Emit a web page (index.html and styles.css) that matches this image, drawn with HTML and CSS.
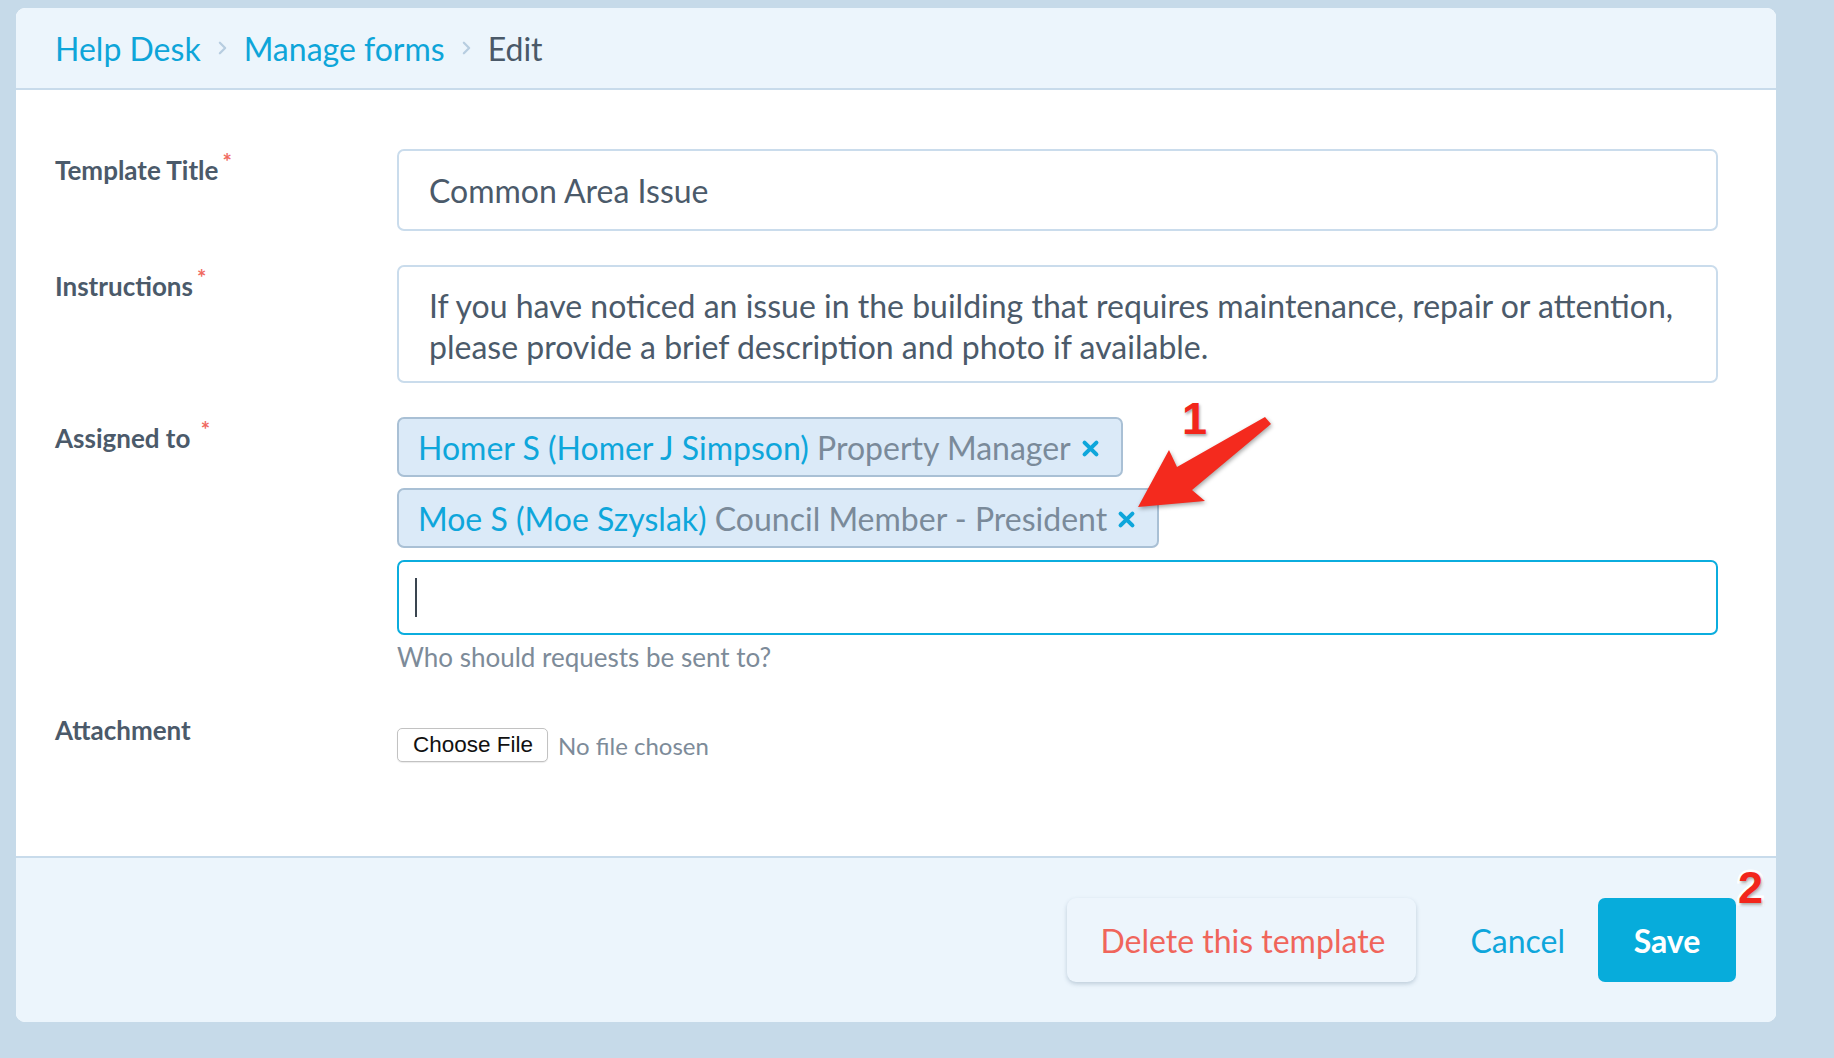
FILE: index.html
```html
<!DOCTYPE html>
<html lang="en">
<head>
<meta charset="utf-8">
<title>Edit form template</title>
<link rel="stylesheet" href="styles.css">
</head>
<body>
<div class="page">
  <div class="card">
    <header class="crumbs">
      <a class="crumb-link" href="#">Help Desk</a>
      <svg class="chev" viewBox="0 0 10 16"><path d="M2 2l6 6-6 6" fill="none" stroke="#b7cde0" stroke-width="2.6" stroke-linecap="round" stroke-linejoin="round"/></svg>
      <a class="crumb-link" href="#">Manage forms</a>
      <svg class="chev" viewBox="0 0 10 16"><path d="M2 2l6 6-6 6" fill="none" stroke="#b7cde0" stroke-width="2.6" stroke-linecap="round" stroke-linejoin="round"/></svg>
      <span class="crumb-current">Edit</span>
    </header>

    <section class="form">
      <div class="row row-title">
        <div class="label">Template Title<span class="req">*</span></div>
        <div class="field"><div class="input">Common Area Issue</div></div>
      </div>

      <div class="row row-instr">
        <div class="label">Instructions<span class="req">*</span></div>
        <div class="field"><div class="textarea">If you have noticed an issue in the building that requires maintenance, repair or attention,<br>please provide a brief description and photo if available.</div></div>
      </div>

      <div class="row row-assign">
        <div class="label">Assigned to <span class="req req-spaced">*</span></div>
        <div class="field">
          <div class="tags">
            <div class="tag"><span class="tag-name">Homer S (Homer J Simpson)</span>&nbsp;<span class="tag-role">Property Manager</span><svg class="tag-x" viewBox="0 0 16 16"><path d="M3 3l10 10M13 3L3 13" stroke="#0ea6db" stroke-width="3.4" stroke-linecap="round"/></svg></div>
            <div class="tag"><span class="tag-name">Moe S (Moe Szyslak)</span>&nbsp;<span class="tag-role">Council Member - President</span><svg class="tag-x" viewBox="0 0 16 16"><path d="M3 3l10 10M13 3L3 13" stroke="#0ea6db" stroke-width="3.4" stroke-linecap="round"/></svg></div>
          </div>
          <div class="search"><span class="caret"></span></div>
          <div class="hint">Who should requests be sent to?</div>
        </div>
      </div>

      <div class="row row-attach">
        <div class="label">Attachment</div>
        <div class="field field-file">
          <div class="file">
            <span class="file-btn">Choose File</span>
            <span class="file-name">No file chosen</span>
          </div>
        </div>
      </div>
    </section>

    <footer class="actions">
      <button class="btn-delete">Delete this template</button>
      <a class="btn-cancel" href="#">Cancel</a>
      <button class="btn-save">Save</button>
    </footer>
  </div>

  <div class="mark mark-1">1</div>
  <svg class="arrow" viewBox="0 0 170 130" width="170" height="130">
    <polygon points="18,112 49,55 57,72 145,22 151,29 72,95 85,106" fill="#f42a1e"/>
  </svg>
  <div class="mark mark-2">2</div>
</div>
</body>
</html>
```

FILE: styles.css
```css
html, body {
  margin: 0;
  padding: 0;
}

body {
  background: #c6dae9;
  font-family: Lato, "Open Sans", sans-serif;
  color: #4b5a6a;
}

.page {
  position: relative;
  box-sizing: border-box;
  min-height: 1058px;
  padding: 8px 58px 36px 16px;
}

.card {
  background: #ffffff;
  border-radius: 9px;
  overflow: hidden;
}

/* breadcrumb header */
.crumbs {
  height: 80px;
  background: #ecf5fc;
  border-bottom: 2px solid #c8dbeb;
  display: flex;
  align-items: center;
  gap: 17px;
  padding-left: 39px;
  font-size: 32px;
}

.crumb-link {
  color: #0ea5d9;
  text-decoration: none;
}

.crumb-current {
  color: #4a5968;
}

.chev {
  width: 9px;
  height: 14px;
}

/* form body */
.form {
  padding: 59px 58px 94px 39px;
  border-bottom: 2px solid #c8dbeb;
}

.row {
  display: grid;
  grid-template-columns: 342px 1fr;
}

.row-instr { margin-top: 34px; }
.row-assign { margin-top: 34px; }
.row-attach { margin-top: 38px; }

.label {
  font-weight: 700;
  font-size: 26px;
  line-height: 30px;
  padding-top: 6px;
  color: #4b5a6a;
}

.req {
  color: #f06a5f;
  font-size: 22px;
  font-weight: 700;
  vertical-align: super;
  line-height: 0;
  margin-left: 4px;
}

.req-spaced {
  margin-left: 4px;
}

.input,
.textarea {
  box-sizing: border-box;
  border: 2px solid #cadcec;
  border-radius: 7px;
  font-size: 32px;
  color: #4b5a6a;
}

.input {
  height: 82px;
  display: flex;
  align-items: center;
  padding: 0 30px;
}

.textarea {
  padding: 18px 30px 14px;
  line-height: 41px;
}

/* tags */
.tags {
  display: flex;
  flex-direction: column;
  align-items: flex-start;
  gap: 11px;
}

.tag {
  box-sizing: border-box;
  height: 60px;
  display: inline-flex;
  align-items: center;
  padding: 0 21px 0 19px;
  background: #dbeaf8;
  border: 2px solid #a9c0d5;
  border-radius: 7px;
  font-size: 32px;
  white-space: nowrap;
}

.tag-name { color: #0ea6db; }
.tag-role { color: #7a8a9a; }

.tag-x {
  width: 19px;
  height: 19px;
  margin-left: 10px;
  margin-top: 3px;
}

.search {
  box-sizing: border-box;
  margin-top: 12px;
  height: 75px;
  border: 2px solid #0badde;
  border-radius: 7px;
  display: flex;
  align-items: center;
  padding-left: 16px;
}

.caret {
  width: 2px;
  height: 39px;
  background: #3a4550;
}

.hint {
  margin-top: 8px;
  font-size: 26px;
  line-height: 28px;
  color: #7d8b99;
}

/* attachment */
.field-file {
  padding-top: 19px;
}

.file {
  display: flex;
  align-items: center;
  gap: 10px;
}

.file-btn {
  box-sizing: border-box;
  height: 34px;
  display: inline-flex;
  align-items: center;
  padding: 0 14px 0 15px;
  border: 1px solid #c2c2c2;
  border-radius: 5px;
  background: #ffffff;
  font-family: "Liberation Sans", Arial, sans-serif;
  font-size: 22.5px;
  color: #111111;
  box-shadow: 0 1px 1px rgba(0, 0, 0, 0.08);
}

.file-name {
  font-size: 24px;
  color: #7d8b99;
}

/* footer */
.actions {
  height: 164px;
  background: #ecf5fc;
  display: flex;
  justify-content: flex-end;
  align-items: center;
  padding-right: 40px;
}

.actions button,
.actions a {
  font-family: Lato, "Open Sans", sans-serif;
  font-size: 32px;
}

.btn-delete {
  height: 84px;
  padding: 0 31px 0 33px;
  border: none;
  border-radius: 9px;
  background: #edf5fc;
  color: #f0655b;
  box-shadow: 0 2px 4px rgba(70, 100, 130, 0.28);
}

.btn-cancel {
  margin-left: 54px;
  margin-right: 33px;
  color: #0ea6db;
  text-decoration: none;
}

.btn-save {
  width: 138px;
  height: 84px;
  border: none;
  border-radius: 7px;
  background: #07acdb;
  color: #ffffff;
  font-weight: 700;
}

/* screenshot annotations */
.mark {
  position: absolute;
  font-family: "Liberation Sans", Arial, sans-serif;
  font-weight: 700;
  font-size: 45px;
  line-height: 1;
  color: #f2261b;
  -webkit-text-stroke: 5px #ffffff;
  paint-order: stroke fill;
  text-shadow: 1px 2px 3px rgba(0, 0, 0, 0.35);
}

.mark-1 { left: 1182px; top: 396px; }
.mark-2 { left: 1738px; top: 865px; }

.arrow {
  position: absolute;
  left: 1120px;
  top: 395px;
  filter: drop-shadow(1px 2px 2px rgba(0, 0, 0, 0.35));
}
```
